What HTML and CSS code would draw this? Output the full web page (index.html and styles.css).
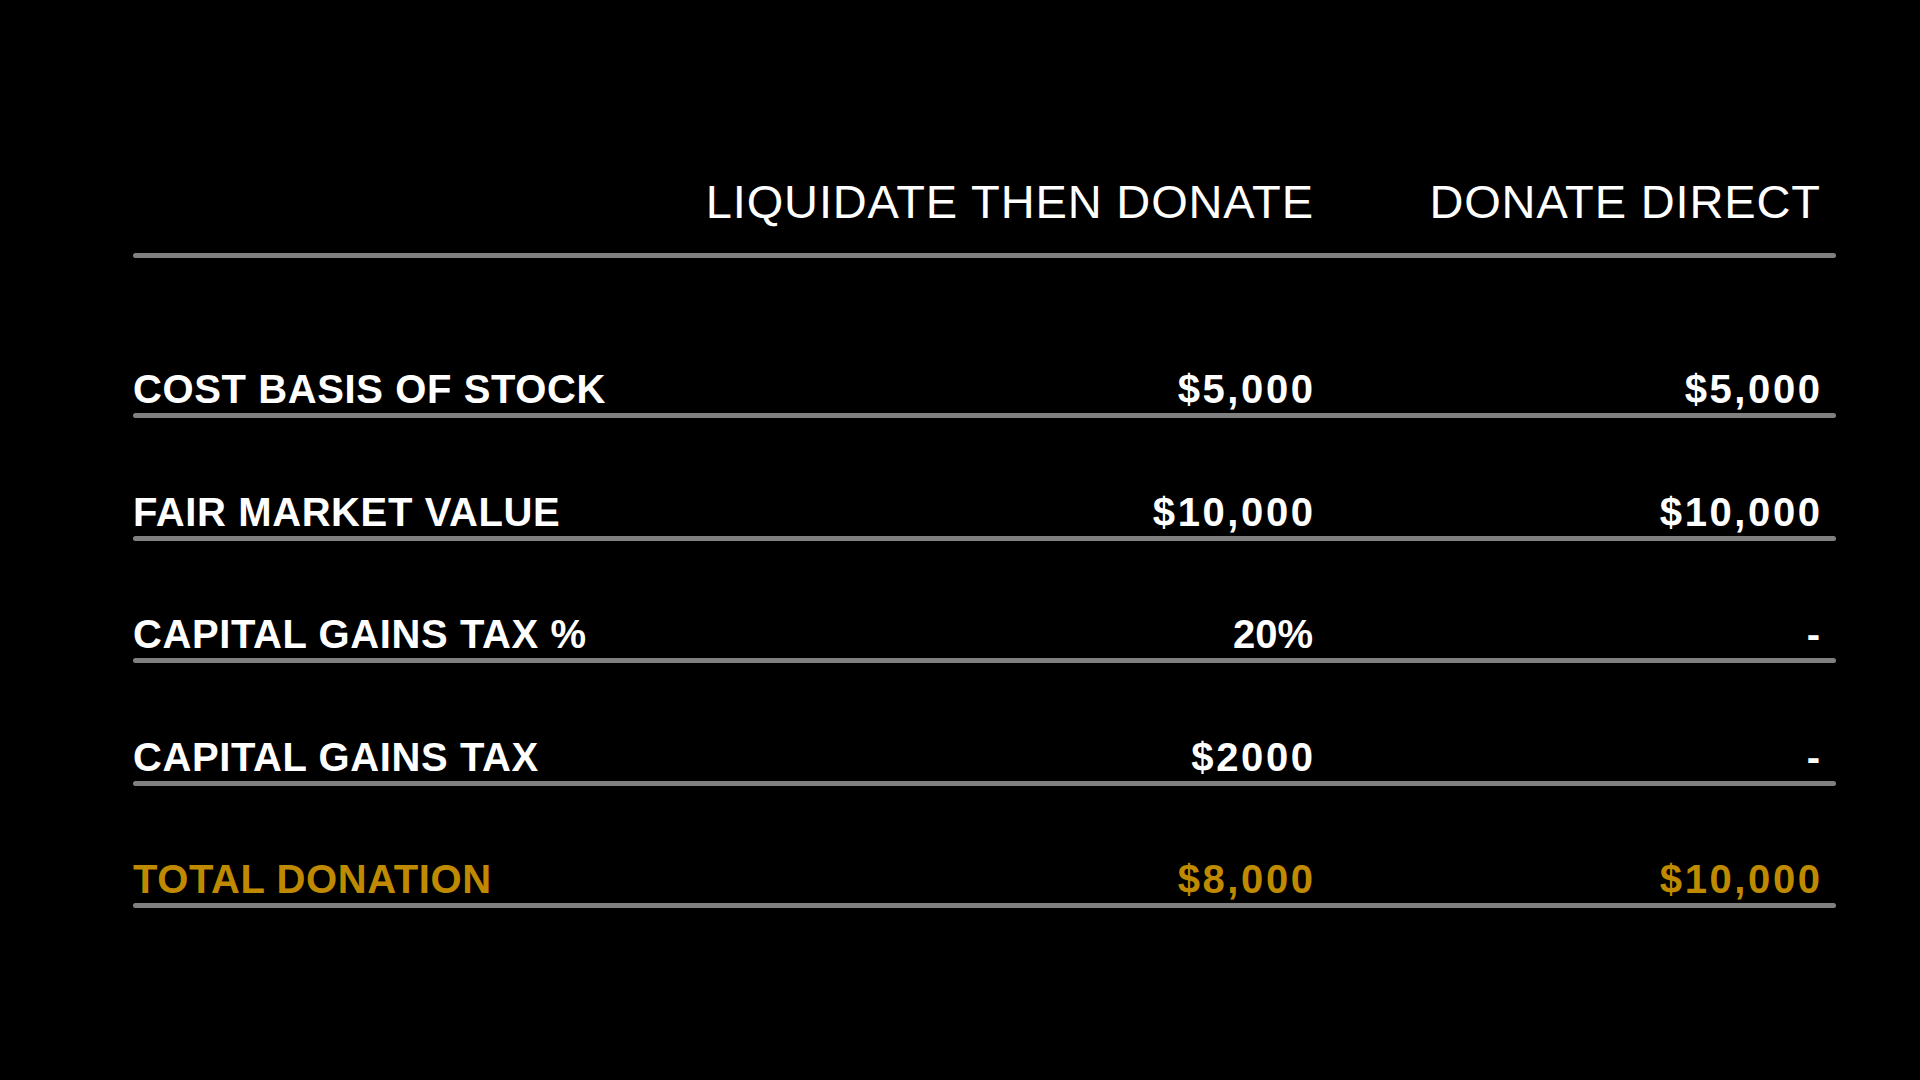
FILE: index.html
```html
<!DOCTYPE html>
<html lang="en">
<head>
    <meta charset="UTF-8">
    <meta name="viewport" content="width=device-width, initial-scale=1.0">
    <title>Liquidate vs Donate Direct</title>
    <link rel="stylesheet" href="styles.css">
</head>
<body>
    <div class="container">
        <div class="row head">
            <div class="cells">
                <span></span>
                <span class="num">LIQUIDATE THEN DONATE</span>
                <span class="num">DONATE DIRECT</span>
            </div>
        </div>
        <div class="row first">
            <div class="cells">
                <span class="label">COST BASIS OF STOCK</span>
                <span class="num val">$5,000</span>
                <span class="num val">$5,000</span>
            </div>
        </div>
        <div class="row">
            <div class="cells">
                <span class="label">FAIR MARKET VALUE</span>
                <span class="num val">$10,000</span>
                <span class="num val">$10,000</span>
            </div>
        </div>
        <div class="row">
            <div class="cells">
                <span class="label">CAPITAL GAINS TAX %</span>
                <span class="num">20%</span>
                <span class="num">-</span>
            </div>
        </div>
        <div class="row">
            <div class="cells">
                <span class="label">CAPITAL GAINS TAX</span>
                <span class="num val">$2000</span>
                <span class="num">-</span>
            </div>
        </div>
        <div class="row total">
            <div class="cells">
                <span class="label">TOTAL DONATION</span>
                <span class="num val">$8,000</span>
                <span class="num val">$10,000</span>
            </div>
        </div>
    </div>
</body>
</html>
```

FILE: styles.css
```css
body {
    margin: 0;
    padding: 0;
    background-color: #000;
    color: #fff;
    font-family: "Liberation Sans", Arial, sans-serif;
    min-height: 1080px;
}
.container {
    width: 1703px;
    margin-left: 133px;
    padding-top: 178px;
}
.cells {
    display: grid;
    grid-template-columns: 1fr 620px 507px;
    padding-right: 16px;
    padding-bottom: 4px;
    font-size: 40px;
    font-weight: bold;
    line-height: 1;
}
.row {
    margin-top: 73.5px;
}
.row::after {
    content: "";
    display: block;
    height: 5px;
    border-radius: 3px;
    background: #808080;
}
.row.first {
    margin-top: 111px;
}
.head {
    margin-top: 0;
}
.head .cells {
    font-size: 47px;
    font-weight: normal;
    letter-spacing: 0.85px;
    padding-bottom: 28px;
}
.head .num {
    margin-right: -0.85px;
}
.label {
    letter-spacing: 0.6px;
}
.num {
    text-align: right;
}
.val {
    letter-spacing: 2.6px;
    margin-right: -2.6px;
}
.total .cells {
    color: #bf8a00;
}
```
